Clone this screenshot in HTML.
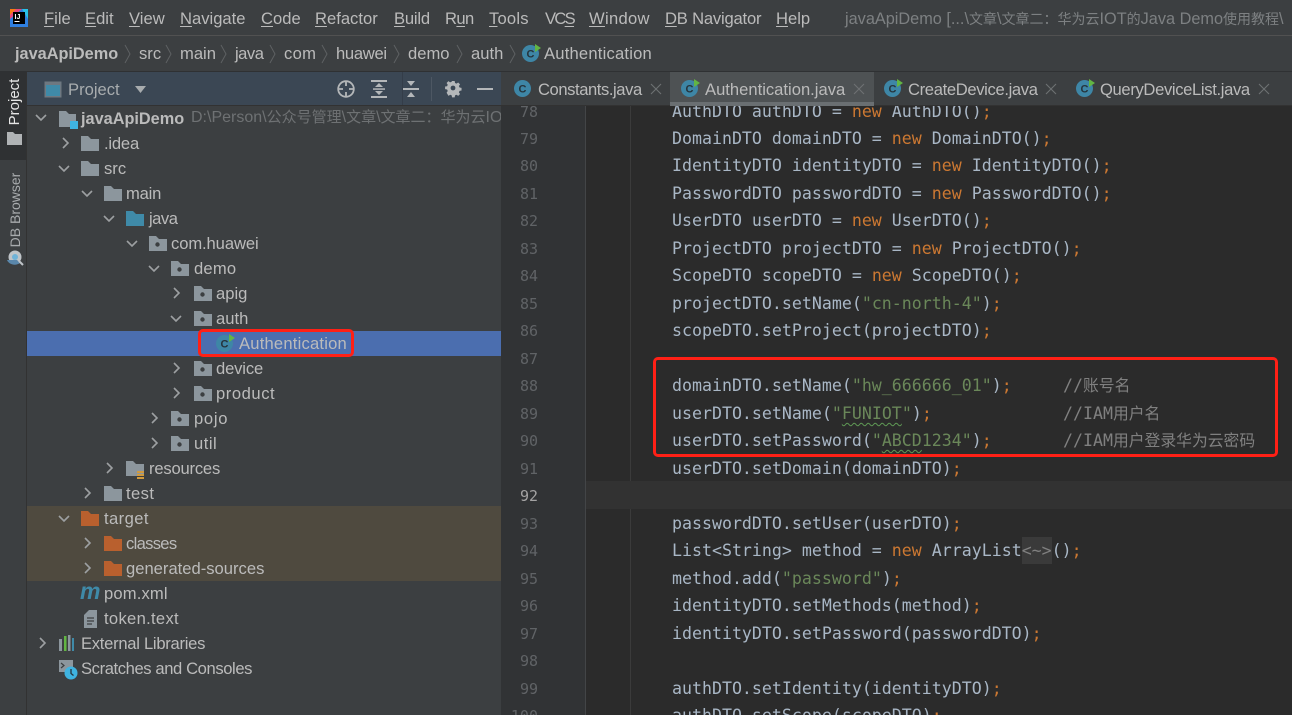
<!DOCTYPE html>
<html><head><meta charset="utf-8">
<style>
html,body{margin:0;padding:0;width:1292px;height:715px;overflow:hidden;background:#3c3f41;}
body{position:relative;font-family:"Liberation Sans","Noto Sans CJK SC",sans-serif;font-size:16.6px;color:#bbb;}
.a{position:absolute}
.t{position:absolute;white-space:nowrap;line-height:20px;height:20px}
u{text-decoration-thickness:1px;text-underline-offset:2px}
svg.i{position:absolute;overflow:visible}
.c{position:absolute;left:672px;white-space:pre;font-family:"DejaVu Sans Mono","Noto Sans CJK SC",monospace;font-size:16.6px;line-height:24px;height:24px;color:#a9b7c6}
.n{position:absolute;left:502px;width:36px;text-align:right;font-family:"DejaVu Sans Mono",monospace;font-size:15px;line-height:24px;height:24px;color:#606366}
.k{color:#cc7832}.s{color:#6a8759}
.z{font-size:15.8px}
.y{font-size:14px}
.v{font-size:15px}
.w{text-decoration:underline wavy #5f9a55;text-decoration-thickness:1px;text-underline-offset:3px}
</style></head><body>
<svg width="0" height="0" style="position:absolute">
<defs>
<g id="r"><path d="M1 0l5 5-5 5" fill="none" stroke="#9da0a2" stroke-width="1.6"/></g>
<g id="d"><path d="M0 1l5 5 5-5" fill="none" stroke="#9da0a2" stroke-width="1.6"/></g>
<g id="f"><path d="M0 0h7l3 3h8v12H0z" fill="#8c969d"/></g>
<g id="p"><path d="M0 0h7l3 3h8v12H0z" fill="#8c969d"/><circle cx="8.500" cy="8.500" r="2.200" fill="#3c3f41"/></g>
<g id="b"><path d="M0 0h7l3 3h8v12H0z" fill="#3f8aa8"/></g>
<g id="o"><path d="M0 0h7l3 3h8v12H0z" fill="#b9602e"/></g>
<g id="cl"><circle cx="8.500" cy="9.500" r="8.500" fill="#3e86a6"/><text x="8.500" y="13.500" text-anchor="middle" font-family="Liberation Sans" font-weight="700" font-size="11" fill="#26343c">C</text><path d="M13 0l6 4-6 4z" fill="#62b543"/></g>
<g id="cn"><circle cx="8.500" cy="8.500" r="8.500" fill="#3e86a6"/><text x="8.500" y="12.500" text-anchor="middle" font-family="Liberation Sans" font-weight="700" font-size="11" fill="#26343c">C</text></g>
<g id="x"><path d="M0 0l10 10M10 0L0 10" fill="none" stroke="#6e7173" stroke-width="1.100"/></g>
</defs></svg>

<!-- menu bar -->
<div class="a" style="left:0;top:35px;width:1292px;height:1px;background:#515151"></div>
<svg class="i" style="left:10px;top:9px" width="18" height="18"><rect width="18" height="18" fill="#2f7fe0"/><path d="M0 0h12L0 10z" fill="#e8467c"/><path d="M0 0h6L0 6z" fill="#f97a12"/><path d="M18 0v10l-6-10z" fill="#27c2e8"/><rect x="3" y="3" width="12" height="12" fill="#000"/><text x="4.500" y="10" font-family="Liberation Sans" font-weight="700" font-size="7" fill="#fff">IJ</text><rect x="4.500" y="12" width="5" height="1" fill="#fff"/></svg>
<div class="t" style="left:44px;top:9px"><u>F</u>ile</div>
<div class="t" style="left:85px;top:9px"><u>E</u>dit</div>
<div class="t" style="left:129px;top:9px"><u>V</u>iew</div>
<div class="t" style="left:180px;top:9px"><u>N</u>avigate</div>
<div class="t" style="left:261px;top:9px"><u>C</u>ode</div>
<div class="t" style="left:315px;top:9px"><u>R</u>efactor</div>
<div class="t" style="left:394px;top:9px;letter-spacing:-.2px"><u>B</u>uild</div>
<div class="t" style="left:445px;top:9px;letter-spacing:-.6px">R<u>u</u>n</div>
<div class="t" style="left:489px;top:9px;letter-spacing:.2px"><u>T</u>ools</div>
<div class="t" style="left:545px;top:9px;letter-spacing:-1.700px">VC<u>S</u></div>
<div class="t" style="left:589px;top:9px;letter-spacing:.3px"><u>W</u>indow</div>
<div class="t" style="left:665px;top:9px;letter-spacing:-.2px"><u>D</u>B Navigator</div>
<div class="t" style="left:776px;top:9px"><u>H</u>elp</div>
<div class="t" style="left:845px;top:9px;color:#7d8082;font-size:16.300px">javaApiDemo [...\<span class="y">文章</span>\<span class="y">文章二：华为云</span>IOT<span class="y">的</span>Java Demo<span class="y">使用教程</span>\</div>

<!-- breadcrumbs -->
<div class="a" style="left:0;top:71px;width:1292px;height:1px;background:#2f3133"></div>
<div class="t" style="left:15px;top:44px;font-weight:700;font-size:16.300px">javaApiDemo</div>
<div class="t" style="left:139px;top:44px">src</div>
<div class="t" style="left:180px;top:44px">main</div>
<div class="t" style="left:235px;top:44px;letter-spacing:-.5px">java</div>
<div class="t" style="left:284px;top:44px;letter-spacing:.3px">com</div>
<div class="t" style="left:336px;top:44px;letter-spacing:-.3px">huawei</div>
<div class="t" style="left:408px;top:44px">demo</div>
<div class="t" style="left:471px;top:44px">auth</div>
<div class="t" style="left:544px;top:44px;letter-spacing:.2px">Authentication</div>
<svg class="i" style="left:0;top:0" width="530" height="72"><g fill="none" stroke="#5e6163" stroke-width="1"><path d="M125 45l5 9-5 9"/><path d="M166 45l5 9-5 9"/><path d="M221 45l5 9-5 9"/><path d="M270 45l5 9-5 9"/><path d="M322 45l5 9-5 9"/><path d="M394 45l5 9-5 9"/><path d="M457 45l5 9-5 9"/><path d="M510 45l5 9-5 9"/></g></svg>
<svg class="i" style="left:522px;top:44px" width="19" height="18"><use href="#cl"/></svg>

<!-- left stripe -->
<div class="a" style="left:0;top:72px;width:26px;height:643px;background:#3c3f41"></div>
<div class="a" style="left:0;top:72px;width:26px;height:88px;background:#2f3133"></div>
<div class="a" style="left:26px;top:72px;width:1px;height:643px;background:#323232"></div>
<div class="t" style="left:-15px;top:92px;width:60px;text-align:center;color:#e6e6e6;font-size:15px;transform:rotate(-90deg)">Project</div>
<svg class="i" style="left:7px;top:132px" width="15" height="13"><path d="M0 0h6l2 2h7v11H0z" fill="#b0b3b5"/></svg>
<div class="t" style="left:-25px;top:200px;width:80px;text-align:center;color:#a8abad;font-size:14px;transform:rotate(-90deg)">DB Browser</div>
<svg class="i" style="left:6px;top:250px" width="18" height="17"><circle cx="9" cy="7" r="6.500" fill="#bfc4c8"/><circle cx="9" cy="7" r="3" fill="#6fb3d8"/><path d="M1 10c2 5 9 6 13 3l-3-3z" fill="#5a87ab"/><path d="M13 11l4 4" stroke="#bfc4c8" stroke-width="2"/></svg>

<!-- project panel -->
<div class="a" style="left:27px;top:72px;width:474px;height:33px;background:#3b4754"></div>
<div class="a" style="left:27px;top:105px;width:474px;height:1px;background:#323232"></div>
<div class="a" style="left:402px;top:72px;width:1px;height:33px;background:#343d49"></div>
<div class="a" style="left:431px;top:77px;width:1px;height:24px;background:#4d5763"></div>
<svg class="i" style="left:44px;top:81px" width="18" height="17"><rect x="0.500" y="0.500" width="17" height="16" fill="#6e7881"/><rect x="2" y="4" width="14" height="11" fill="#3f8aa8"/></svg>
<div class="t" style="left:68px;top:80px;color:#a8acae">Project</div>
<svg class="i" style="left:135px;top:86px" width="12" height="8"><path d="M0 0h11L5.500 7z" fill="#a8acae"/></svg>
<svg class="i" style="left:337px;top:80px" width="18" height="18"><g fill="none" stroke="#b4b7b9" stroke-width="1.800"><circle cx="9" cy="9" r="7.800"/><path d="M9 1v5M9 12v5M1 9h5M12 9h5"/></g></svg>
<svg class="i" style="left:371px;top:80px" width="16" height="18"><g fill="#b4b7b9"><rect width="16" height="2"/><rect y="16" width="16" height="2"/><rect x="2" y="8.300" width="12" height="1.500"/><path d="M8 3l4 4H4zM8 15l4-4H4z"/></g></svg>
<svg class="i" style="left:403px;top:80px" width="16" height="18"><g fill="#b4b7b9"><rect y="8" width="16" height="2"/><path d="M4 1h8L8 6zM4 17h8l-4-5z"/></g></svg>
<svg class="i" style="left:445px;top:81px" width="16" height="16"><path d="M6.500 0h3l.4 2.300 1.700.7 1.900-1.300 2.100 2.100-1.300 1.900.7 1.700 2.300.4v3l-2.300.4-.7 1.700 1.300 1.900-2.100 2.100-1.900-1.300-1.700.7-.4 2.300h-3l-.4-2.300-1.700-.7-1.900 1.300L.3 13.300l1.300-1.900-.7-1.700L-1.400 9.300v-3l2.300-.4.7-1.700L.3 2.300 2.400.2l1.900 1.300 1.700-.7z" transform="scale(.88) translate(1.500 0)" fill="#b4b7b9"/><circle cx="8" cy="7" r="2.400" fill="#3b4754"/></svg>
<div class="a" style="left:477px;top:88px;width:16px;height:2px;background:#b4b7b9"></div>

<!-- tree rows bg -->
<div class="a" style="left:27px;top:331px;width:474px;height:25px;background:#4b6eaf"></div>
<div class="a" style="left:27px;top:506px;width:474px;height:75px;background:#4f4a3f"></div>

<!-- tree -->
<svg class="i" style="left:36px;top:114px" width="11" height="8"><use href="#d"/></svg>
<svg class="i" style="left:59px;top:111px" width="20" height="18"><path d="M0 0h7l3 3h7v13H0z" fill="#8c969d"/><rect x="11" y="10" width="8" height="8" fill="#3fb3e0"/></svg>
<div class="t" style="left:81px;top:109px;font-weight:700;font-size:16.300px">javaApiDemo</div>
<div class="a" style="left:191px;top:106px;width:310px;height:25px;overflow:hidden"><div class="t" style="left:0;top:2px;color:#6e7173;font-size:16px">D:\Person\<span class="v">公众号管理</span>\<span class="v">文章</span>\<span class="v">文章二：华为云</span>IOT<span class="v">的</span>Java Demo<span class="v">使用教程</span>\</div></div>

<svg class="i" style="left:62px;top:138px" width="8" height="11"><use href="#r"/></svg>
<svg class="i" style="left:81px;top:136px" width="18" height="15"><use href="#f"/></svg>
<div class="t" style="left:104px;top:134px;letter-spacing:-.2px">.idea</div>

<svg class="i" style="left:59px;top:165px" width="11" height="8"><use href="#d"/></svg>
<svg class="i" style="left:81px;top:161px" width="18" height="15"><use href="#f"/></svg>
<div class="t" style="left:104px;top:159px">src</div>

<svg class="i" style="left:82px;top:190px" width="11" height="8"><use href="#d"/></svg>
<svg class="i" style="left:104px;top:186px" width="18" height="15"><use href="#f"/></svg>
<div class="t" style="left:126px;top:184px;letter-spacing:-.2px">main</div>

<svg class="i" style="left:104px;top:215px" width="11" height="8"><use href="#d"/></svg>
<svg class="i" style="left:126px;top:211px" width="18" height="15"><use href="#b"/></svg>
<div class="t" style="left:149px;top:209px;letter-spacing:-.5px">java</div>

<svg class="i" style="left:127px;top:240px" width="11" height="8"><use href="#d"/></svg>
<svg class="i" style="left:149px;top:236px" width="18" height="15"><use href="#p"/></svg>
<div class="t" style="left:171px;top:234px;letter-spacing:-.1px">com.huawei</div>

<svg class="i" style="left:149px;top:265px" width="11" height="8"><use href="#d"/></svg>
<svg class="i" style="left:171px;top:261px" width="18" height="15"><use href="#p"/></svg>
<div class="t" style="left:194px;top:259px;letter-spacing:.2px">demo</div>

<svg class="i" style="left:173px;top:288px" width="8" height="11"><use href="#r"/></svg>
<svg class="i" style="left:194px;top:286px" width="18" height="15"><use href="#p"/></svg>
<div class="t" style="left:216px;top:284px">apig</div>

<svg class="i" style="left:171px;top:315px" width="11" height="8"><use href="#d"/></svg>
<svg class="i" style="left:194px;top:311px" width="18" height="15"><use href="#p"/></svg>
<div class="t" style="left:216px;top:309px">auth</div>

<svg class="i" style="left:216px;top:334px" width="19" height="19"><use href="#cl"/></svg>
<div class="t" style="left:239px;top:334px;letter-spacing:.2px">Authentication</div>

<svg class="i" style="left:173px;top:363px" width="8" height="11"><use href="#r"/></svg>
<svg class="i" style="left:194px;top:361px" width="18" height="15"><use href="#p"/></svg>
<div class="t" style="left:216px;top:359px;letter-spacing:-.15px">device</div>

<svg class="i" style="left:173px;top:388px" width="8" height="11"><use href="#r"/></svg>
<svg class="i" style="left:194px;top:386px" width="18" height="15"><use href="#p"/></svg>
<div class="t" style="left:216px;top:384px;letter-spacing:.55px">product</div>

<svg class="i" style="left:151px;top:413px" width="8" height="11"><use href="#r"/></svg>
<svg class="i" style="left:171px;top:411px" width="18" height="15"><use href="#p"/></svg>
<div class="t" style="left:194px;top:409px;letter-spacing:.7px">pojo</div>

<svg class="i" style="left:151px;top:438px" width="8" height="11"><use href="#r"/></svg>
<svg class="i" style="left:171px;top:436px" width="18" height="15"><use href="#p"/></svg>
<div class="t" style="left:194px;top:434px;letter-spacing:.5px">util</div>

<svg class="i" style="left:106px;top:463px" width="8" height="11"><use href="#r"/></svg>
<svg class="i" style="left:126px;top:461px" width="18" height="18"><use href="#f"/><path d="M11 10h7v2h-7zM11 13h7v2h-7zM11 16h7v2h-7z" fill="#d19a3e"/></svg>
<div class="t" style="left:149px;top:459px;letter-spacing:-.2px">resources</div>

<svg class="i" style="left:84px;top:488px" width="8" height="11"><use href="#r"/></svg>
<svg class="i" style="left:104px;top:486px" width="18" height="15"><use href="#f"/></svg>
<div class="t" style="left:126px;top:484px;letter-spacing:.4px">test</div>

<svg class="i" style="left:59px;top:515px" width="11" height="8"><use href="#d"/></svg>
<svg class="i" style="left:81px;top:511px" width="18" height="15"><use href="#o"/></svg>
<div class="t" style="left:104px;top:509px;letter-spacing:.4px">target</div>

<svg class="i" style="left:84px;top:538px" width="8" height="11"><use href="#r"/></svg>
<svg class="i" style="left:104px;top:536px" width="18" height="15"><use href="#o"/></svg>
<div class="t" style="left:126px;top:534px;letter-spacing:-.7px">classes</div>

<svg class="i" style="left:84px;top:563px" width="8" height="11"><use href="#r"/></svg>
<svg class="i" style="left:104px;top:561px" width="18" height="15"><use href="#o"/></svg>
<div class="t" style="left:126px;top:559px">generated-sources</div>

<svg class="i" style="left:80px;top:584px" width="20" height="16"><text x="0" y="15" font-family="Liberation Sans" font-weight="700" font-style="italic" font-size="23" fill="#3f8aa8">m</text></svg>
<div class="t" style="left:104px;top:584px;letter-spacing:.15px">pom.xml</div>

<svg class="i" style="left:84px;top:610px" width="13" height="18"><path d="M5 0h8v18H0V5z" fill="#8c969d"/><path d="M3 8h7M3 11h7M3 14h5" stroke="#3c3f41" stroke-width="1.200"/></svg>
<div class="t" style="left:104px;top:609px;letter-spacing:.3px">token.text</div>

<svg class="i" style="left:39px;top:638px" width="8" height="11"><use href="#r"/></svg>
<svg class="i" style="left:59px;top:635px" width="18" height="16"><rect x="0" y="4" width="3" height="12" fill="#8c969d"/><rect x="5" y="1" width="2.500" height="15" fill="#62b543"/><rect x="9" y="0" width="2.500" height="16" fill="#8c969d"/><rect x="13" y="3" width="2" height="13" fill="#3f8aa8"/></svg>
<div class="t" style="left:81px;top:634px;letter-spacing:-.28px">External Libraries</div>

<svg class="i" style="left:59px;top:660px" width="20" height="20"><rect x="0" y="0" width="14" height="12" fill="#8c969d"/><path d="M2 3l3 2.500-3 2.500" fill="none" stroke="#3c3f41" stroke-width="1.200"/><circle cx="12" cy="13" r="6.500" fill="#3fb3e0"/><path d="M12 9v4.500l2.500 2" fill="none" stroke="#26343c" stroke-width="1.300"/></svg>
<div class="t" style="left:81px;top:659px;letter-spacing:-.4px">Scratches and Consoles</div>

<!-- tabs -->
<div class="a" style="left:501px;top:72px;width:791px;height:34px;background:#3c3f41"></div>
<div class="a" style="left:501px;top:105px;width:791px;height:1px;background:#323232"></div>
<div class="a" style="left:670px;top:72px;width:204px;height:34px;background:#4e5254"></div>
<div class="a" style="left:670px;top:102px;width:204px;height:4px;background:#6a6f72"></div>
<svg class="i" style="left:514px;top:80px" width="18" height="18"><use href="#cn"/></svg>
<div class="t" style="left:538px;top:80px;letter-spacing:-.43px">Constants.java</div>
<svg class="i" style="left:651px;top:84px" width="10" height="10"><use href="#x"/></svg>
<svg class="i" style="left:681px;top:79px" width="19" height="19"><use href="#cl"/></svg>
<div class="t" style="left:705px;top:80px">Authentication.java</div>
<svg class="i" style="left:854px;top:84px" width="10" height="10"><use href="#x"/></svg>
<svg class="i" style="left:884px;top:79px" width="19" height="19"><use href="#cl"/></svg>
<div class="t" style="left:908px;top:80px;letter-spacing:-.35px">CreateDevice.java</div>
<svg class="i" style="left:1046px;top:84px" width="10" height="10"><use href="#x"/></svg>
<svg class="i" style="left:1076px;top:79px" width="19" height="19"><use href="#cl"/></svg>
<div class="t" style="left:1100px;top:80px;letter-spacing:-.35px">QueryDeviceList.java</div>
<svg class="i" style="left:1259px;top:84px" width="10" height="10"><use href="#x"/></svg>

<!-- editor -->
<div class="a" style="left:501px;top:106px;width:791px;height:609px;background:#2b2b2b"></div>
<div class="a" style="left:501px;top:106px;width:791px;height:609px;overflow:hidden">
<div class="a" style="left:0;top:0;width:84px;height:609px;background:#313335"></div>
<div class="a" style="left:84px;top:0;width:1px;height:609px;background:#434547"></div>
<div class="a" style="left:129px;top:0;width:1px;height:609px;background:#3b3b3b"></div>
<div class="a" style="left:85px;top:375px;width:706px;height:28px;background:#323232"></div>
<div style="position:absolute;left:-501px;top:-105px;width:1292px;height:715px">
<div class="n" style="top:99px">78</div>
<div class="n" style="top:126px">79</div>
<div class="n" style="top:153px">80</div>
<div class="n" style="top:181px">81</div>
<div class="n" style="top:208px">82</div>
<div class="n" style="top:236px">83</div>
<div class="n" style="top:263px">84</div>
<div class="n" style="top:291px">85</div>
<div class="n" style="top:318px">86</div>
<div class="n" style="top:346px">87</div>
<div class="n" style="top:373px">88</div>
<div class="n" style="top:401px">89</div>
<div class="n" style="top:428px">90</div>
<div class="n" style="top:456px">91</div>
<div class="n" style="top:483px;color:#a4a3a3">92</div>
<div class="n" style="top:511px">93</div>
<div class="n" style="top:538px">94</div>
<div class="n" style="top:566px">95</div>
<div class="n" style="top:593px">96</div>
<div class="n" style="top:621px">97</div>
<div class="n" style="top:648px">98</div>
<div class="n" style="top:676px">99</div>
<div class="n" style="top:703px">100</div>

<div class="c" style="top:99px">AuthDTO authDTO = <span class="k">new</span> AuthDTO()<span class="k">;</span></div>
<div class="c" style="top:126px">DomainDTO domainDTO = <span class="k">new</span> DomainDTO()<span class="k">;</span></div>
<div class="c" style="top:153px">IdentityDTO identityDTO = <span class="k">new</span> IdentityDTO()<span class="k">;</span></div>
<div class="c" style="top:181px">PasswordDTO passwordDTO = <span class="k">new</span> PasswordDTO()<span class="k">;</span></div>
<div class="c" style="top:208px">UserDTO userDTO = <span class="k">new</span> UserDTO()<span class="k">;</span></div>
<div class="c" style="top:236px">ProjectDTO projectDTO = <span class="k">new</span> ProjectDTO()<span class="k">;</span></div>
<div class="c" style="top:263px">ScopeDTO scopeDTO = <span class="k">new</span> ScopeDTO()<span class="k">;</span></div>
<div class="c" style="top:291px">projectDTO.setName(<span class="s">"cn-north-4"</span>)<span class="k">;</span></div>
<div class="c" style="top:318px">scopeDTO.setProject(projectDTO)<span class="k">;</span></div>
<div class="c" style="top:373px">domainDTO.setName(<span class="s">"hw_666666_01"</span>)<span class="k">;</span></div>
<div class="c" style="top:401px">userDTO.setName(<span class="s">"<span class="w">FUNIOT</span>"</span>)<span class="k">;</span></div>
<div class="c" style="top:428px">userDTO.setPassword(<span class="s">"<span class="w">ABCD</span>1234"</span>)<span class="k">;</span></div>
<div class="c" style="top:456px">userDTO.setDomain(domainDTO)<span class="k">;</span></div>
<div class="c" style="top:373px;left:1063px;color:#808080">//<span class="z">账号名</span></div>
<div class="c" style="top:401px;left:1063px;color:#808080">//IAM<span class="z">用户名</span></div>
<div class="c" style="top:428px;left:1063px;color:#808080">//IAM<span class="z">用户登录华为云密码</span></div>
<div class="c" style="top:511px">passwordDTO.setUser(userDTO)<span class="k">;</span></div>
<div class="c" style="top:538px">List&lt;String&gt; method = <span class="k">new</span> ArrayList<span style="background:#3a3a3a;color:#808080;padding:4px 0">&lt;~&gt;</span>()<span class="k">;</span></div>
<div class="c" style="top:566px">method.add(<span class="s">"password"</span>)<span class="k">;</span></div>
<div class="c" style="top:593px">identityDTO.setMethods(method)<span class="k">;</span></div>
<div class="c" style="top:621px">identityDTO.setPassword(passwordDTO)<span class="k">;</span></div>
<div class="c" style="top:676px">authDTO.setIdentity(identityDTO)<span class="k">;</span></div>
<div class="c" style="top:703px">authDTO.setScope(scopeDTO)<span class="k">;</span></div>
</div>
</div>

<!-- red boxes -->
<div class="a" style="left:198px;top:329px;width:156px;height:28px;border:3px solid #ff2016;border-radius:5px;box-sizing:border-box"></div>
<div class="a" style="left:653px;top:357px;width:625px;height:100px;border:3px solid #ff2016;border-radius:5px;box-sizing:border-box"></div>
</body></html>
